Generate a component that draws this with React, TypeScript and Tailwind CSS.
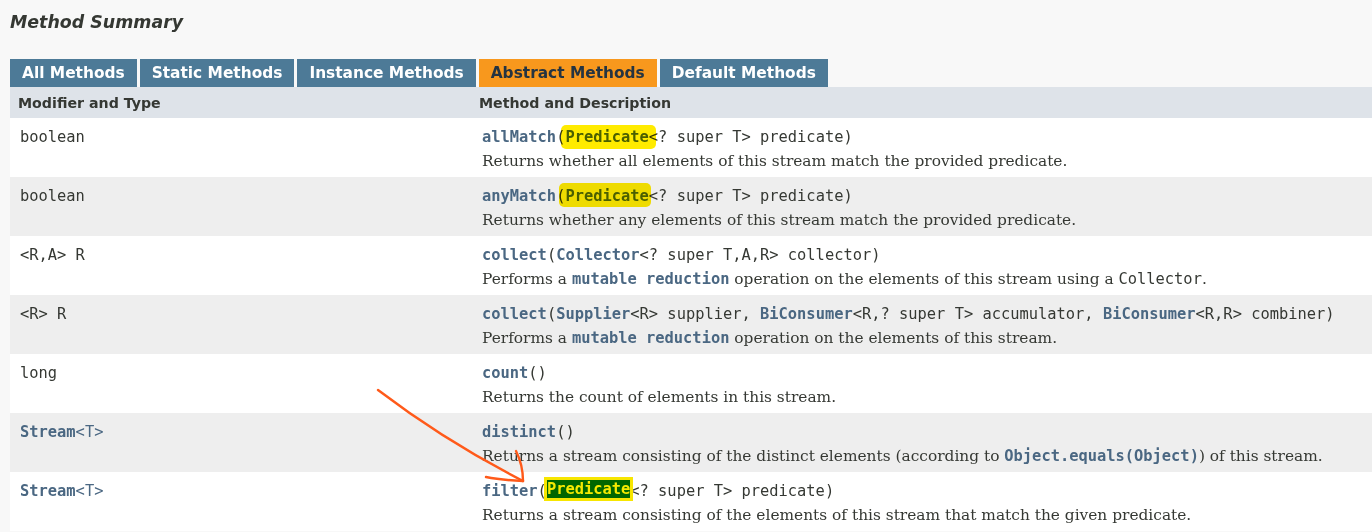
import React from 'react'

const mono = "font-['DejaVu_Sans_Mono',monospace]"
const serif = "font-['DejaVu_Serif',serif]"

const Link = ({ children }: { children: React.ReactNode }) => (
    <span className="font-bold text-[#4a6782]">{children}</span>
)

// marker-style yellow stroke laid over the text
const Marker = ({ children, left, top, width, height }: { children: React.ReactNode; left: number; top: number; width: number; height: number }) => (
    <span className="relative">
        {children}
        <span
            className="absolute bg-[#ffeb00] mix-blend-multiply rounded-[5px]"
            style={{ left, top, width, height }}
        />
    </span>
)

interface Row {
    type: React.ReactNode
    sig: React.ReactNode
    desc: React.ReactNode
}

const rows: Row[] = [
    {
        type: 'boolean',
        sig: (
            <>
                <Link>allMatch</Link>
                <Marker left={5} top={-3} width={95} height={24}>
                    (<Link>Predicate</Link>&lt;
                </Marker>
                ? super T&gt; predicate)
            </>
        ),
        desc: 'Returns whether all elements of this stream match the provided predicate.',
    },
    {
        type: 'boolean',
        sig: (
            <>
                <Link>anyMatch</Link>
                <Marker left={3} top={-4} width={92} height={24}>
                    (<Link>Predicate</Link>&lt;
                </Marker>
                ? super T&gt; predicate)
            </>
        ),
        desc: 'Returns whether any elements of this stream match the provided predicate.',
    },
    {
        type: '<R,A> R',
        sig: (
            <>
                <Link>collect</Link>(<Link>Collector</Link>&lt;? super T,A,R&gt; collector)
            </>
        ),
        desc: (
            <>
                Performs a <span className={`${mono} font-bold text-[#4a6782]`}>mutable reduction</span> operation on the
                elements of this stream using a <span className={mono}>Collector</span>.
            </>
        ),
    },
    {
        type: '<R> R',
        sig: (
            <>
                <Link>collect</Link>(<Link>Supplier</Link>&lt;R&gt; supplier, <Link>BiConsumer</Link>&lt;R,? super T&gt;
                accumulator, <Link>BiConsumer</Link>&lt;R,R&gt; combiner)
            </>
        ),
        desc: (
            <>
                Performs a <span className={`${mono} font-bold text-[#4a6782]`}>mutable reduction</span> operation on the
                elements of this stream.
            </>
        ),
    },
    {
        type: 'long',
        sig: (
            <>
                <Link>count</Link>()
            </>
        ),
        desc: 'Returns the count of elements in this stream.',
    },
    {
        type: (
            <>
                <Link>Stream</Link>
                <span className="text-[#4a6782]">&lt;T&gt;</span>
            </>
        ),
        sig: (
            <>
                <Link>distinct</Link>()
            </>
        ),
        desc: (
            <>
                Returns a stream consisting of the distinct elements (according to{' '}
                <span className={`${mono} font-bold text-[#4a6782]`}>Object.equals(Object)</span>) of this stream.
            </>
        ),
    },
    {
        type: (
            <>
                <Link>Stream</Link>
                <span className="text-[#4a6782]">&lt;T&gt;</span>
            </>
        ),
        sig: (
            <>
                <Link>filter</Link>(
                <span className="relative -top-[2px] font-bold text-[#f5ea00] bg-[#006600] shadow-[0_0_0_3px_#f7e600]">
                    Predicate
                </span>
                &lt;? super T&gt; predicate)
            </>
        ),
        desc: 'Returns a stream consisting of the elements of this stream that match the given predicate.',
    },
]

const tabs = ['All Methods', 'Static Methods', 'Instance Methods', 'Abstract Methods', 'Default Methods']

export default function App() {
    return (
        <div className="relative min-h-screen overflow-hidden bg-[#f8f8f8] font-['DejaVu_Sans',sans-serif] text-[#353833]">
            <h3 className="pl-[10px] pt-[11px] text-[17.4px] font-bold italic leading-[22px]">Method Summary</h3>

            <div className="pl-[10px] mt-[26px]">
                {/* Tabs */}
                <div className="flex gap-[3px] h-[28px]">
                    {tabs.map((t) => (
                        <div
                            key={t}
                            className={`flex items-center pt-[2px] pl-[12px] pr-[12px] text-[15.4px] font-bold whitespace-nowrap ${
                                t === 'Abstract Methods' ? 'bg-[#f8981d] text-[#253441]' : 'bg-[#4d7a97] text-white'
                            }`}
                        >
                            {t}
                        </div>
                    ))}
                </div>

                {/* Header */}
                <div className="flex h-[31px] bg-[#dee3e9] text-[14.2px] font-bold pt-[3px] items-center">
                    <div className="w-[462px] pl-[8px]">Modifier and Type</div>
                    <div className="flex-1 pl-[7px]">Method and Description</div>
                </div>

                {rows.map((r, i) => (
                    <div key={i} className={`flex h-[59px] ${i % 2 === 1 ? 'bg-[#eeeeee]' : 'bg-white'}`}>
                        <div className={`w-[462px] pl-[10px] pt-[9px] ${mono} text-[15.4px] leading-[20px] whitespace-pre`}>
                            {r.type}
                        </div>
                        <div className="flex-1 pl-[10px] pt-[9px]">
                            <div className={`${mono} text-[15.4px] leading-[20px] whitespace-pre`}>{r.sig}</div>
                            <div className={`${serif} text-[15.4px] leading-[20px] mt-[4px] whitespace-nowrap`}>{r.desc}</div>
                        </div>
                    </div>
                ))}
            </div>

            {/* hand-drawn arrow */}
            <svg className="absolute inset-0 w-full h-full pointer-events-none" viewBox="0 0 1372 532" fill="none">
                <path d="M378 390 Q 445 441 523 481" stroke="#ff5a1a" strokeWidth="2.4" strokeLinecap="round" />
                <path d="M516 451 Q 523 465 523 481" stroke="#ff5a1a" strokeWidth="2.4" strokeLinecap="round" />
                <path d="M486 477 Q 500 480 523 481" stroke="#ff5a1a" strokeWidth="2.4" strokeLinecap="round" />
            </svg>
        </div>
    )
}
